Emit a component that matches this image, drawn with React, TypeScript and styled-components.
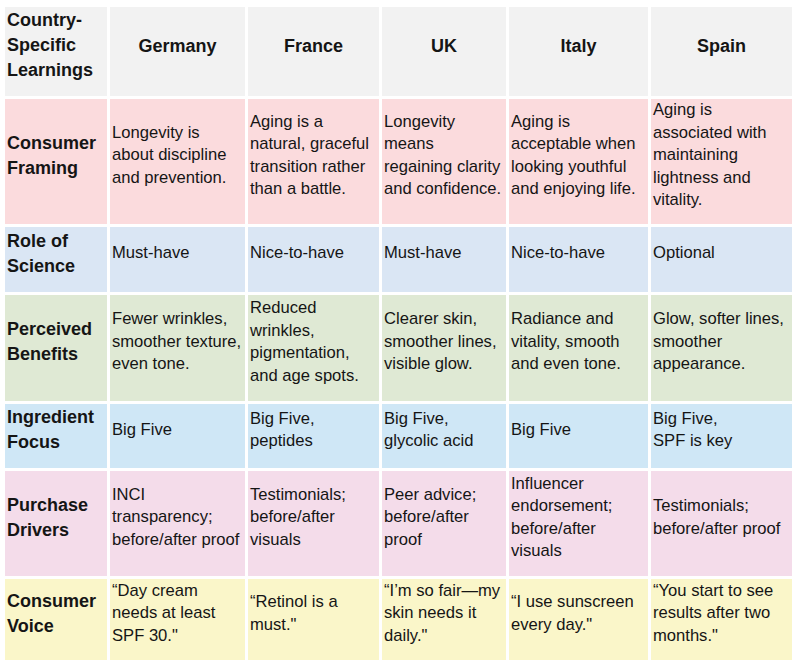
import React from 'react'
import styled, { createGlobalStyle } from 'styled-components'

const GlobalStyle = createGlobalStyle`
  html, body {
    margin: 0;
    padding: 0;
    background: #ffffff;
  }
  body {
    font-family: 'Liberation Sans', Arial, sans-serif;
    color: #151515;
  }
`

const Page = styled.div`
  padding: 7px 8px 3px 5px;
  width: 800px;
  box-sizing: border-box;
`

const Grid = styled.div`
  display: grid;
  grid-template-columns: 102px 135px 131px 124px 139px 141px;
  grid-auto-rows: auto;
  gap: 3px;
`

const Cell = styled.div<{ $bg: string; $h: number }>`
  background: ${(p) => p.$bg};
  height: ${(p) => p.$h}px;
  box-sizing: border-box;
  padding: 0 2px 12px 2px;
  display: flex;
  flex-direction: column;
  justify-content: center;
  font-size: 16.6px;
  line-height: 22.5px;
  white-space: nowrap;
  overflow: hidden;
`

const RowHead = styled(Cell)`
  font-weight: bold;
  font-size: 18px;
  line-height: 25px;
`

const ColHead = styled(Cell)`
  font-weight: bold;
  font-size: 18px;
  line-height: 24px;
  align-items: center;
  text-align: center;
`

const HEADER_BG = '#f2f2f2'

const countries = ['Germany', 'France', 'UK', 'Italy', 'Spain']

type Row = { label: string[]; bg: string; h: number; cells: string[][] }

const rows: Row[] = [
  {
    label: ['Consumer', 'Framing'],
    bg: '#fbdbdd',
    h: 125,
    cells: [
      ['Longevity is', 'about discipline', 'and prevention.'],
      ['Aging is a', 'natural, graceful', 'transition rather', 'than a battle.'],
      ['Longevity', 'means', 'regaining clarity', 'and confidence.'],
      ['Aging is', 'acceptable when', 'looking youthful', 'and enjoying life.'],
      ['Aging is', 'associated with', 'maintaining', 'lightness and', 'vitality.'],
    ],
  },
  {
    label: ['Role of', 'Science'],
    bg: '#dae6f4',
    h: 65,
    cells: [['Must-have'], ['Nice-to-have'], ['Must-have'], ['Nice-to-have'], ['Optional']],
  },
  {
    label: ['Perceived', 'Benefits'],
    bg: '#dfe9d4',
    h: 106,
    cells: [
      ['Fewer wrinkles,', 'smoother texture,', 'even tone.'],
      ['Reduced', 'wrinkles,', 'pigmentation,', 'and age spots.'],
      ['Clearer skin,', 'smoother lines,', 'visible glow.'],
      ['Radiance and', 'vitality, smooth', 'and even tone.'],
      ['Glow, softer lines,', 'smoother', 'appearance.'],
    ],
  },
  {
    label: ['Ingredient', 'Focus'],
    bg: '#cfe7f6',
    h: 64,
    cells: [
      ['Big Five'],
      ['Big Five,', 'peptides'],
      ['Big Five,', 'glycolic acid'],
      ['Big Five'],
      ['Big Five,', 'SPF is key'],
    ],
  },
  {
    label: ['Purchase', 'Drivers'],
    bg: '#f4dcea',
    h: 105,
    cells: [
      ['INCI', 'transparency;', 'before/after proof'],
      ['Testimonials;', 'before/after', 'visuals'],
      ['Peer advice;', 'before/after', 'proof'],
      ['Influencer', 'endorsement;', 'before/after', 'visuals'],
      ['Testimonials;', 'before/after proof'],
    ],
  },
  {
    label: ['Consumer', 'Voice'],
    bg: '#faf6c9',
    h: 81,
    cells: [
      ['\u201CDay cream', 'needs at least', 'SPF 30."'],
      ['\u201CRetinol is a', 'must."'],
      ['\u201CI\u2019m so fair\u2014my', 'skin needs it', 'daily."'],
      ['\u201CI use sunscreen', 'every day."'],
      ['\u201CYou start to see', 'results after two', 'months."'],
    ],
  },
]

const Lines = ({ lines }: { lines: string[] }) => (
  <>
    {lines.map((l, i) => (
      <span key={i}>{l}</span>
    ))}
  </>
)

export default function App() {
  return (
    <Page>
      <GlobalStyle />
      <Grid>
        <RowHead $bg={HEADER_BG} $h={89}>
          <Lines lines={['Country-', 'Specific', 'Learnings']} />
        </RowHead>
        {countries.map((c) => (
          <ColHead key={c} $bg={HEADER_BG} $h={89}>
            {c}
          </ColHead>
        ))}
        {rows.map((r) => (
          <React.Fragment key={r.label.join(' ')}>
            <RowHead $bg={r.bg} $h={r.h}>
              <Lines lines={r.label} />
            </RowHead>
            {r.cells.map((lines, i) => (
              <Cell key={i} $bg={r.bg} $h={r.h}>
                <Lines lines={lines} />
              </Cell>
            ))}
          </React.Fragment>
        ))}
      </Grid>
    </Page>
  )
}
